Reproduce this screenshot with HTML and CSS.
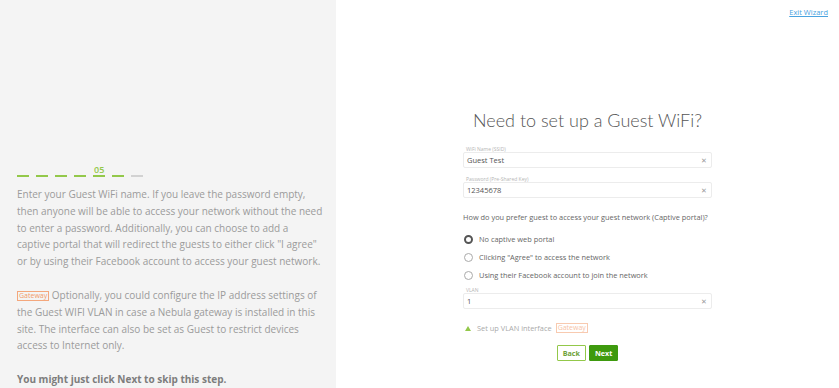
FILE: index.html
```html
<!DOCTYPE html>
<html lang="en">
<head>
  <meta charset="UTF-8">
  <title>Guest WiFi</title>
  <link rel="stylesheet" href="styles.css">
</head>
<body>
  <div class="intro">
    <!-- step indicator -->
    <div class="steps">
      <span class="dash"></span>
      <span class="dash"></span>
      <span class="dash"></span>
      <span class="dash"></span>
      <span class="step-now">05</span>
      <span class="dash"></span>
      <span class="dash todo"></span>
    </div>
    <p>Enter your Guest WiFi name. If you leave the password empty, then anyone will be able to access your network without the need to enter a password. Additionally, you can choose to add a captive portal that will redirect the guests to either click "I agree" or by using their Facebook account to access your guest network.</p>
    <p><span class="tag">Gateway</span> Optionally, you could configure the IP address settings of the Guest WIFI VLAN in case a Nebula gateway is installed in this site. The interface can also be set as Guest to restrict devices access to Internet only.</p>
    <p class="hint">You might just click Next to skip this step.</p>
  </div>

  <div class="wizard">
    <div class="topbar"><a href="#" class="exit">Exit Wizard</a></div>

    <div class="form">
      <h1>Need to set up a Guest WiFi?</h1>

      <div class="field">
        <label>WiFi Name (SSID)</label>
        <div class="input"><span>Guest Test</span><span class="clear">&#x2715;</span></div>
      </div>
      <div class="field">
        <label>Password (Pre-Shared Key)</label>
        <div class="input"><span>12345678</span><span class="clear">&#x2715;</span></div>
      </div>

      <p class="question">How do you prefer guest to access your guest network (Captive portal)?</p>
      <div class="radio checked"><span class="dot"></span>No captive web portal</div>
      <div class="radio"><span class="dot"></span>Clicking "Agree" to access the network</div>
      <div class="radio"><span class="dot"></span>Using their Facebook account to join the network</div>

      <div class="field vlan">
        <label>VLAN</label>
        <div class="input"><span>1</span><span class="clear">&#x2715;</span></div>
      </div>

      <div class="vlan-link"><span class="arrow"></span>Set up VLAN interface <span class="tag">Gateway</span></div>

      <div class="buttons">
        <button class="back">Back</button>
        <button class="next">Next</button>
      </div>
    </div>
  </div>
</body>
</html>
```

FILE: styles.css
```css
body {
  margin: 0;
  display: flex;
  height: 388px;
  overflow: hidden;
  font-family: 'Open Sans', 'Liberation Sans', sans-serif;
  background-color: white;
}
.intro {
  width: 336px;
  flex: none;
  box-sizing: border-box;
  background-color: #f4f4f4;
  padding: 166px 12px 0 17px;
  color: #9b9b9b;
}
.steps {
  display: flex;
  align-items: flex-end;
  gap: 7px;
  height: 12px;
}
.dash {
  width: 12px;
  height: 2px;
  background-color: #93c84a;
  margin-bottom: 1px;
}
.dash.todo {
  background-color: #d2d2d2;
}
.step-now {
  font-size: 9px;
  font-weight: 600;
  color: #93c84a;
  border-bottom: 2px solid #93c84a;
  padding: 0 1px;
  line-height: 10px;
  margin-bottom: 1px;
}
.intro p {
  font-size: 10px;
  line-height: 16.8px;
  margin: 8px 0 17px 0;
}
.intro p.hint {
  font-weight: bold;
  color: #7d7d7d;
}
.tag {
  display: inline-block;
  border: 1px solid #f4a77c;
  color: #f29a6a;
  font-size: 7px;
  line-height: 8px;
  padding: 0 1px;
  vertical-align: 1px;
}
.wizard {
  flex: 1;
  display: flex;
  flex-direction: column;
  align-items: center;
}
.topbar {
  align-self: stretch;
  display: flex;
  justify-content: flex-end;
  padding: 7px 11px 0 0;
}
.exit {
  font-size: 7.5px;
  color: #4aa3df;
}
.form {
  width: 249px;
  margin-top: 92px;
}
h1 {
  font-family: 'Lato', 'Open Sans', sans-serif;
  font-weight: 300;
  font-size: 18px;
  color: #555;
  text-align: center;
  margin: 0 0 15px 0;
}
.field {
  margin-bottom: 8px;
}
.field label {
  display: block;
  font-size: 5px;
  color: #b5b5b5;
  line-height: 6px;
  padding-left: 3px;
}
.input {
  display: flex;
  justify-content: space-between;
  align-items: center;
  height: 16px;
  box-sizing: border-box;
  border: 1px solid #ececec;
  border-radius: 2px;
  padding: 0 4px 0 3px;
  font-size: 7.5px;
  color: #555;
}
.clear {
  font-size: 7px;
  color: #999;
}
.question {
  font-size: 7.4px;
  color: #666;
  margin: 14px 0 8px 0;
}
.radio {
  display: flex;
  align-items: center;
  height: 18px;
  font-size: 7.4px;
  color: #666;
}
.dot {
  width: 9px;
  height: 9px;
  border: 1px solid #aaa;
  border-radius: 50%;
  margin: 0 6px 0 1px;
  box-sizing: border-box;
}
.radio.checked .dot {
  border: 2.5px solid #555;
  background-color: white;
}
.field.vlan {
  margin-top: 3px;
}
.vlan-link {
  font-size: 7.4px;
  color: #aaa;
  margin-top: 14px;
  display: flex;
  align-items: center;
  padding-left: 2px;
}
.arrow {
  width: 0;
  height: 0;
  border-left: 3.5px solid transparent;
  border-right: 3.5px solid transparent;
  border-bottom: 5px solid #93c84a;
  margin-right: 6px;
}
.vlan-link .tag {
  margin-left: 4px;
  opacity: 0.6;
}
.buttons {
  display: flex;
  justify-content: center;
  gap: 3px;
  margin-top: 12px;
}
button {
  font-family: inherit;
  font-size: 7.2px;
  font-weight: bold;
  height: 16px;
  padding: 0 5px;
  border-radius: 1px;
  cursor: pointer;
}
.back {
  background-color: white;
  color: #6fa23a;
  border: 1px solid #93c84a;
}
.next {
  background-color: #3e9a0e;
  color: white;
  border: 1px solid #3e9a0e;
}
```
